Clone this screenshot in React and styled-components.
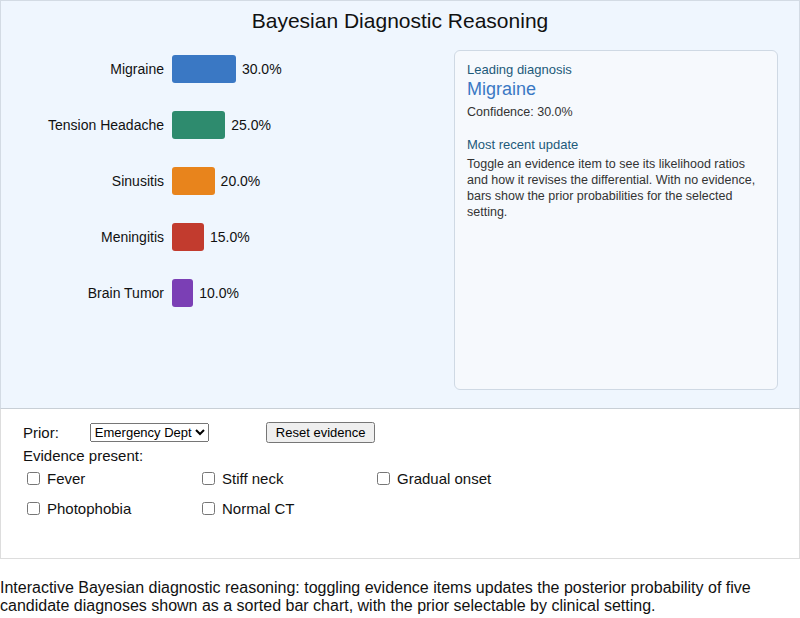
import React from "react";
import styled, { createGlobalStyle } from "styled-components";

const Global = createGlobalStyle`
  body { margin: 0; font-family: "Liberation Sans", Arial, sans-serif; color: #111; }
`;

const Viz = styled.div`
  height: 409px;
  background: #eff6fe;
  border: 1px solid #d3dbe4;
  border-bottom-color: #c8cfd6;
  box-sizing: border-box;
  position: relative;
`;

const Title = styled.h1`
  margin: 0;
  padding-top: 8px;
  text-align: center;
  font-size: 21px;
  font-weight: normal;
  line-height: 24px;
`;

const Body = styled.div`
  display: flex;
  justify-content: space-between;
  padding: 17px 21px 0 0;
`;

const Chart = styled.div`
  display: flex;
  flex-direction: column;
  gap: 28px;
  padding-top: 5px;
`;

const Row = styled.div`
  display: flex;
  align-items: center;
  height: 28px;
  font-size: 14px;
`;

const Label = styled.span`
  width: 163px;
  text-align: right;
  padding-right: 8px;
`;

const Bar = styled.div`
  height: 28px;
  border-radius: 3px;
  background: ${p => p.$color};
  margin-right: 6px;
`;

const Card = styled.div`
  width: 324px;
  height: 340px;
  box-sizing: border-box;
  background: #f6f9fd;
  border: 1px solid #cfd9e4;
  border-radius: 6px;
  padding: 11px 12px;
`;

const Small = styled.div`
  font-size: 13px;
  color: #1d5a7a;
  line-height: 16px;
  margin-top: ${p => p.$top || 0}px;
`;

const Lead = styled.div`
  font-size: 18px;
  color: #3a78c4;
  line-height: 22px;
`;

const Text = styled.div`
  font-size: 12.5px;
  line-height: 16px;
  color: #333;
  margin-top: ${p => p.$top || 0}px;
`;

const Controls = styled.div`
  height: 150px;
  border: 1px solid #ddd;
  border-top: none;
  box-sizing: border-box;
  padding: 12px 22px;
  font-size: 15px;
`;

const Line = styled.div`
  display: flex;
  align-items: center;
  height: 22px;
  margin-top: ${p => p.$top || 0}px;
`;

const Select = styled.select`
  margin-left: 31px;
  font-size: 13px;
  font-family: inherit;
  height: 19px;
`;

const Button = styled.button`
  margin-left: 57px;
  font-size: 13px;
  font-family: inherit;
  padding: 1px 8px;
  height: 21px;
`;

const Grid = styled.div`
  display: grid;
  grid-template-columns: repeat(3, 175px);
  row-gap: 12px;
  margin-top: 3px;
  margin-left: 4px;
`;

const Check = styled.label`
  display: flex;
  align-items: center;
  height: 18px;
  gap: 7px;
  input { margin: 0; width: 13px; height: 13px; }
`;

const Caption = styled.p`
  margin: 20px 0 0;
  font-size: 16px;
  line-height: 18px;
`;

const data = [
  ["Migraine", 30, "#3a78c4"],
  ["Tension Headache", 25, "#2e8b6e"],
  ["Sinusitis", 20, "#e8841c"],
  ["Meningitis", 15, "#c23b2e"],
  ["Brain Tumor", 10, "#7b3fb5"],
];

export default function App() {
  return (
    <>
      <Global />
      <Viz>
        <Title>Bayesian Diagnostic Reasoning</Title>
        <Body>
          <Chart>
            {data.map(([n, v, c]) => (
              <Row key={n}>
                <Label>{n}</Label>
                <Bar $color={c} style={{ width: v * 2.13 }} />
                <span>{v.toFixed(1)}%</span>
              </Row>
            ))}
          </Chart>
          <Card>
            <Small>Leading diagnosis</Small>
            <Lead>Migraine</Lead>
            <Text $top={4}>Confidence: 30.0%</Text>
            <Small $top={17}>Most recent update</Small>
            <Text $top={3}>
              Toggle an evidence item to see its likelihood ratios and how it revises the
              differential. With no evidence, bars show the prior probabilities for the
              selected setting.
            </Text>
          </Card>
        </Body>
      </Viz>
      <Controls>
        <Line>
          Prior:
          <Select defaultValue="ed">
            <option value="ed">Emergency Dept</option>
            <option value="pc">Primary Care</option>
          </Select>
          <Button>Reset evidence</Button>
        </Line>
        <Line $top={1}>Evidence present:</Line>
        <Grid>
          {["Fever", "Stiff neck", "Gradual onset", "Photophobia", "Normal CT"].map(t => (
            <Check key={t}>
              <input type="checkbox" />
              {t}
            </Check>
          ))}
        </Grid>
      </Controls>
      <Caption>
        Interactive Bayesian diagnostic reasoning: toggling evidence items updates the posterior
        probability of five candidate diagnoses shown as a sorted bar chart, with the prior
        selectable by clinical setting.
      </Caption>
    </>
  );
}
